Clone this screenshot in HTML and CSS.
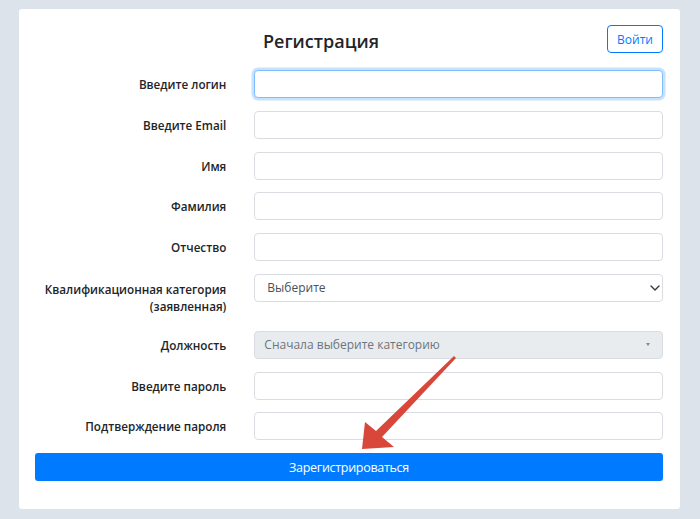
FILE: index.html
```html
<!DOCTYPE html>
<html lang="ru">
<head>
<meta charset="utf-8">
<title>Регистрация</title>
<link rel="stylesheet" href="styles.css">
</head>
<body>
<main class="card">
  <header class="card-head">
    <h1 class="title">Регистрация</h1>
    <button class="btn-outline" type="button">Войти</button>
  </header>
  <form class="form">
    <label class="label" for="login">Введите логин</label>
    <input class="control focus" id="login" type="text">

    <label class="label" for="email">Введите Email</label>
    <input class="control" id="email" type="text">

    <label class="label" for="name">Имя</label>
    <input class="control" id="name" type="text">

    <label class="label" for="surname">Фамилия</label>
    <input class="control" id="surname" type="text">

    <label class="label" for="patr">Отчество</label>
    <input class="control" id="patr" type="text">

    <label class="label label-tall" for="cat">Квалификационная категория<br>(заявленная)</label>
    <div class="select-wrap">
      <select class="control select" id="cat"><option>Выберите</option></select>
      <svg class="chevron" width="10" height="6" viewBox="0 0 10 6"><path d="M1 1 L5 5 L9 1" fill="none" stroke="#343a40" stroke-width="1.4" stroke-linecap="round" stroke-linejoin="round"/></svg>
    </div>

    <label class="label" for="pos">Должность</label>
    <div class="select2">
      <span class="select2-text">Сначала выберите категорию</span>
      <span class="caret"></span>
    </div>

    <label class="label" for="pass">Введите пароль</label>
    <input class="control" id="pass" type="password">

    <label class="label" for="pass2">Подтверждение пароля</label>
    <input class="control" id="pass2" type="password">

    <button class="btn-primary" type="button">Зарегистрироваться</button>
  </form>
</main>
<svg class="annot" width="700" height="519" viewBox="0 0 700 519">
  <polygon points="454,356 456,358 382,437 394,447 362,449 365,422 376,431" fill="#d9473a"/>
</svg>
</body>
</html>
```
FILE: styles.css
```css
* { box-sizing: border-box; }
html, body { margin: 0; }
body {
  width: 700px;
  height: 519px;
  background: #dce3ea;
  padding: 9px 20px 10px 19px;
  font-family: "Open Sans", "Liberation Sans", sans-serif;
  color: #212529;
  position: relative;
  overflow: hidden;
}
.card {
  background: #fff;
  border-radius: 3px;
  height: 500px;
  padding: 16px 17px 29px 16px;
}
.card-head {
  display: flex;
  align-items: center;
  height: 28px;
  margin-bottom: 17px;
}
.title {
  flex: 1;
  margin: 0;
  text-align: center;
  font-size: 18px;
  font-weight: 560;
  line-height: 28px;
  color: #212529;
  padding-top: 4px;
}
.btn-outline {
  width: 56px;
  height: 28px;
  border: 1px solid #007bff;
  border-radius: 4px;
  background: #fff;
  color: #007bff;
  font-family: inherit;
  font-size: 12px;
  padding: 0;
}
.form {
  display: grid;
  grid-template-columns: calc((100% - 60px) / 3) 1fr;
  column-gap: 30px;
  row-gap: 12.8px;
  align-items: start;
}
.label {
  text-align: right;
  font-size: 11.7px;
  font-weight: 600;
  line-height: 17px;
  padding: 6px 0 4px;
  margin-right: -2px;
  color: #212529;
  white-space: nowrap;
}
.label-tall { padding: 7px 0 3px; }
.control {
  display: block;
  width: 100%;
  height: 28px;
  border: 1px solid #d9dde2;
  border-radius: 4px;
  background: #fff;
  font-family: inherit;
  font-size: 12px;
  color: #495057;
  padding: 0 12px;
  outline: none;
}
.control.focus {
  border-color: #80bdff;
  box-shadow: 0 0 0 2.5px rgba(0, 123, 255, 0.22);
}
.select-wrap {
  display: grid;
  align-items: center;
}
.select-wrap > * { grid-area: 1 / 1; }
.select {
  appearance: none;
  -webkit-appearance: none;
  color: #495057;
}
.chevron {
  justify-self: end;
  margin-right: 3px;
}
.select2 {
  display: flex;
  align-items: center;
  justify-content: space-between;
  height: 28px;
  background: #e9ecef;
  border: 1px solid #d9dde2;
  border-radius: 4px;
  padding: 0 12px 0 9px;
}
.select2-text {
  font-size: 12px;
  color: #6c757d;
}
.caret {
  width: 0;
  height: 0;
  border-left: 2.5px solid transparent;
  border-right: 2.5px solid transparent;
  border-top: 3px solid #888;
}
.btn-primary {
  grid-column: 1 / -1;
  height: 28px;
  border: none;
  border-radius: 3px;
  background: #007bff;
  color: #fff;
  font-family: inherit;
  font-size: 12.5px;
  letter-spacing: -0.3px;
  padding: 0;
}
.annot {
  position: absolute;
  left: 0;
  top: 0;
  pointer-events: none;
}
```
